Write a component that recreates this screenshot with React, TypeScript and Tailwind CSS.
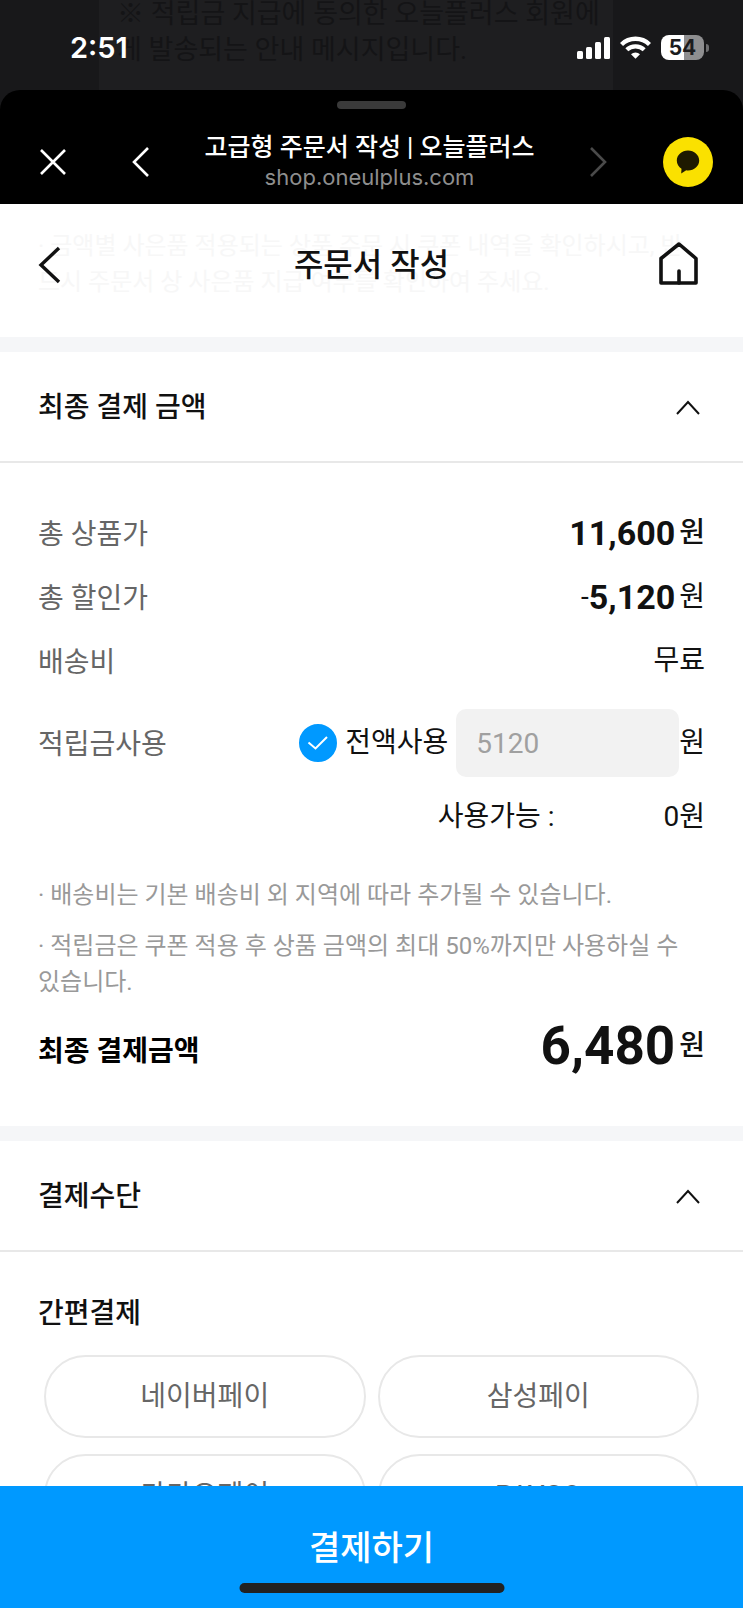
import { useState, type ReactNode } from 'react';

const easyPayMethods = ['네이버페이', '삼성페이', '카카오페이', 'PAYCO'];

function StatusBar() {
  return (
    <div className="relative h-[110px] shrink-0 overflow-hidden bg-[#18181a]">
      {/* dimmed chat message behind the sheet */}
      <div className="absolute inset-y-0 left-[99px] w-[514px] bg-[#1e1e20] pl-[18px] text-[27px] leading-9 whitespace-nowrap text-[#141416]">
        <p className="-mt-1">※ 적립금 지급에 동의한 오늘플러스 회원에</p>
        <p>게 발송되는 안내 메시지입니다.</p>
      </div>
      <div className="relative flex h-[95px] items-center justify-between pr-[34px] pl-[70px] text-white">
        <span className="font-['Inter'] text-[29px] font-semibold">2:51</span>
        <div className="flex items-center gap-[10px]">
          <svg className="h-[22px] w-[33px]" viewBox="0 0 33 22" fill="currentColor" aria-hidden="true">
            <rect x="0" y="14" width="6" height="8" rx="1.5" />
            <rect x="9" y="10" width="6" height="12" rx="1.5" />
            <rect x="18" y="5" width="6" height="17" rx="1.5" />
            <rect x="27" y="0" width="6" height="22" rx="1.5" />
          </svg>
          <svg className="h-[23px] w-[31px]" viewBox="0 0 31 23" fill="none" stroke="currentColor" aria-hidden="true">
            <path d="M1.5 8.5a20 20 0 0 1 28 0" strokeWidth="4.4" />
            <path d="M6.8 13.8a12.5 12.5 0 0 1 17.4 0" strokeWidth="4.2" />
            <path d="M15.5 22.8L11 18.3a6.5 6.5 0 0 1 9 0z" fill="currentColor" stroke="none" />
          </svg>
          <div className="flex items-center gap-[2px]">
            <span className="flex h-[25px] w-[43px] items-center justify-center rounded-lg bg-linear-to-r from-white from-54% to-[#8e8e90] to-54% font-['Inter'] text-[21px] font-bold text-[#1c1c1e]">
              54
            </span>
            <span className="h-2 w-[3px] rounded-r-full bg-[#6e6e70]" />
          </div>
        </div>
      </div>
    </div>
  );
}

function BrowserBar() {
  return (
    <header className="relative z-10 -mt-5 h-[114px] shrink-0 rounded-t-[20px] bg-black pt-[11px] text-white">
      <div className="mx-auto h-2 w-[69px] rounded-full bg-[#3a3a3a]" />
      <div className="flex items-center pt-6 pr-[30px] pl-[38px]">
        <button type="button" aria-label="닫기" className="w-[30px]">
          <svg className="size-[30px]" viewBox="0 0 30 30" fill="none" stroke="currentColor" strokeWidth="2.6">
            <path d="M3 3l24 24M27 3L3 27" />
          </svg>
        </button>
        <button type="button" aria-label="뒤로" className="ml-[62px]">
          <svg className="h-[30px] w-5" viewBox="0 0 20 30" fill="none" stroke="currentColor" strokeWidth="2.6">
            <path d="M18 1L4 15l14 14" />
          </svg>
        </button>
        <div className="flex-1 text-center">
          <p className="text-[25px] leading-[30px] font-medium">고급형 주문서 작성 | 오늘플러스</p>
          <p className="font-['Inter'] text-[22px] leading-7 text-[#8e8e8e]">shop.oneulplus.com</p>
        </div>
        <button type="button" aria-label="앞으로" disabled className="mr-[54px] text-[#4a4a4a]">
          <svg className="h-[30px] w-5" viewBox="0 0 20 30" fill="none" stroke="currentColor" strokeWidth="2.6">
            <path d="M2 1l14 14L2 29" />
          </svg>
        </button>
        <button type="button" aria-label="카카오톡 공유" className="rounded-full bg-[#fae100]">
          <svg className="size-[50px]" viewBox="0 0 50 50" fill="#1e1a00">
            <path d="M25 13.5c-6.2 0-11.2 4.5-11.2 10 0 3.5 1.9 6.5 4.7 8.3l-.3 4.7 5-3.2c.6.1 1.2.2 1.8.2 6.2 0 11.2-4.5 11.2-10s-5-10-11.2-10z" />
          </svg>
        </button>
      </div>
    </header>
  );
}

function PageHeader() {
  return (
    <div className="relative h-[133px]">
      {/* notice text showing faintly through the header */}
      <p className="absolute top-6 left-[38px] text-[24px] leading-9 whitespace-nowrap text-[#f7f7f7]">
        · 금액별 사은품 적용되는 상품 주문 시 쿠폰 내역을 확인하시고, 반
        <br />
        드시 주문서 상 사은품 지급 여부를 확인하여 주세요.
      </p>
      <div className="relative flex h-[122px] items-center justify-between px-[38px]">
        <button type="button" aria-label="이전 페이지" className="w-12">
          <svg className="h-[38px] w-6" viewBox="0 0 24 38" fill="none" stroke="currentColor" strokeWidth="3.4">
            <path d="M21 2L3 19l18 17" />
          </svg>
        </button>
        <h1 className="text-[32px] leading-10 font-medium">주문서 작성</h1>
        <a href="#" aria-label="홈" className="flex w-12 justify-end pr-[6px] pb-1">
          <svg
            className="h-[44px] w-10"
            viewBox="0 0 40 44"
            fill="none"
            stroke="currentColor"
            strokeWidth="3.6"
            strokeLinecap="round"
            strokeLinejoin="round"
          >
            <path d="M20 3L2 17.5V42h35V17.5z" />
            <path d="M20 30v12" />
          </svg>
        </a>
      </div>
    </div>
  );
}

function Section({ title, children }: { title: string; children: ReactNode }) {
  const [open, setOpen] = useState(true);

  return (
    <section className="border-t-[15px] border-[#f5f6f8]">
      <h2 className="border-b-2 border-[#e8e8e8]">
        <button
          type="button"
          aria-expanded={open}
          onClick={() => setOpen(!open)}
          className="flex h-[109px] w-full items-center justify-between pt-[2px] pr-[42px] pl-[38px] text-[28px] leading-8 font-medium"
        >
          {title}
          <svg
            className={open ? 'h-4 w-[26px]' : 'h-4 w-[26px] rotate-180'}
            viewBox="0 0 26 16"
            fill="none"
            stroke="currentColor"
            strokeWidth="2"
            aria-hidden="true"
          >
            <path d="M2 14L13 2l11 12" />
          </svg>
        </button>
      </h2>
      {open && children}
    </section>
  );
}

function Row({ label, children }: { label: string; children: ReactNode }) {
  return (
    <div className="flex items-center justify-between">
      <dt className="pt-1 text-[#666]">{label}</dt>
      <dd className="flex h-8 items-center">{children}</dd>
    </div>
  );
}

function PaymentSummary() {
  const [useAll, setUseAll] = useState(true);

  return (
    <div className="px-[38px] pt-[52px] pb-12">
      <dl className="flex flex-col gap-7 text-[28px] leading-8">
        <Row label="총 상품가">
          <strong className="mr-1 text-[34px] font-bold">11,600</strong>
          <span className="font-medium">원</span>
        </Row>
        <Row label="총 할인가">
          -<strong className="text-[34px] font-bold">5,120</strong>
          <span className="ml-1">원</span>
        </Row>
        <Row label="배송비">무료</Row>
        <div className="flex h-[72px] items-center justify-between">
          <dt className="pt-1 text-[#666]">적립금사용</dt>
          <dd className="flex items-center">
            <label className="flex items-center gap-2">
              <span className="relative flex size-[38px]">
                <input
                  type="checkbox"
                  checked={useAll}
                  onChange={(e) => setUseAll(e.target.checked)}
                  className="size-full appearance-none rounded-full border-2 border-[#ddd] checked:border-[#0099ff] checked:bg-[#0099ff]"
                />
                <svg
                  className="pointer-events-none absolute inset-0 size-full"
                  viewBox="0 0 38 38"
                  fill="none"
                  stroke="#fff"
                  strokeWidth="2"
                  aria-hidden="true"
                >
                  <path d="M9.5 18.5l7 6L28 13" />
                </svg>
              </span>
              전액사용
            </label>
            <input
              type="text"
              aria-label="적립금사용"
              value="5120"
              disabled
              readOnly
              className="ml-2 h-[68px] w-[223px] rounded-[10px] bg-[#f2f2f2] px-5 text-[#a0a0a0]"
            />
            원
          </dd>
        </div>
      </dl>
      <p className="mt-[22px] flex justify-end gap-[109px] text-[28px] leading-8">
        <span>사용가능 :</span>
        <span>0원</span>
      </p>
      <ul className="mt-11 flex flex-col gap-[15px] text-[24px] leading-9 text-[#999]">
        <li>· 배송비는 기본 배송비 외 지역에 따라 추가될 수 있습니다.</li>
        <li>· 적립금은 쿠폰 적용 후 상품 금액의 최대 50%까지만 사용하실 수 있습니다.</li>
      </ul>
      <div className="mt-[14px] flex items-center justify-between">
        <span className="pt-3 text-[28px] leading-8 font-bold text-black">최종 결제금액</span>
        <span className="flex items-center text-[28px]">
          <strong className="mr-1 text-[53px] leading-[64px] font-bold">6,480</strong>
          <span className="font-medium">원</span>
        </span>
      </div>
    </div>
  );
}

function EasyPay() {
  return (
    <div className="px-[38px] pt-[46px] pb-10">
      <h3 className="text-[28px] leading-8 font-medium">간편결제</h3>
      <div className="mt-[25px] grid grid-cols-2 gap-x-3 gap-y-4 px-[6px]">
        {easyPayMethods.map((name) => (
          <button
            key={name}
            type="button"
            className="h-[83px] rounded-full border-2 border-[#e8e8e8] text-[28px] leading-8 text-[#666]"
          >
            {name}
          </button>
        ))}
      </div>
    </div>
  );
}

export default function App() {
  return (
    <div className="flex h-screen flex-col bg-white font-['Roboto','Noto_Sans_CJK_KR',sans-serif] text-[#111] break-keep">
      <StatusBar />
      <BrowserBar />
      <main className="min-h-0 flex-1 overflow-hidden">
        <PageHeader />
        <Section title="최종 결제 금액">
          <PaymentSummary />
        </Section>
        <Section title="결제수단">
          <EasyPay />
        </Section>
      </main>
      <footer className="relative shrink-0">
        <button
          type="button"
          className="block w-full bg-[#0099ff] pt-[42px] pb-10 text-[34px] leading-10 font-medium text-white"
        >
          결제하기
        </button>
        <span className="absolute bottom-[15px] left-1/2 h-[10px] w-[265px] -translate-x-1/2 rounded-full bg-[#222]" />
      </footer>
    </div>
  );
}
